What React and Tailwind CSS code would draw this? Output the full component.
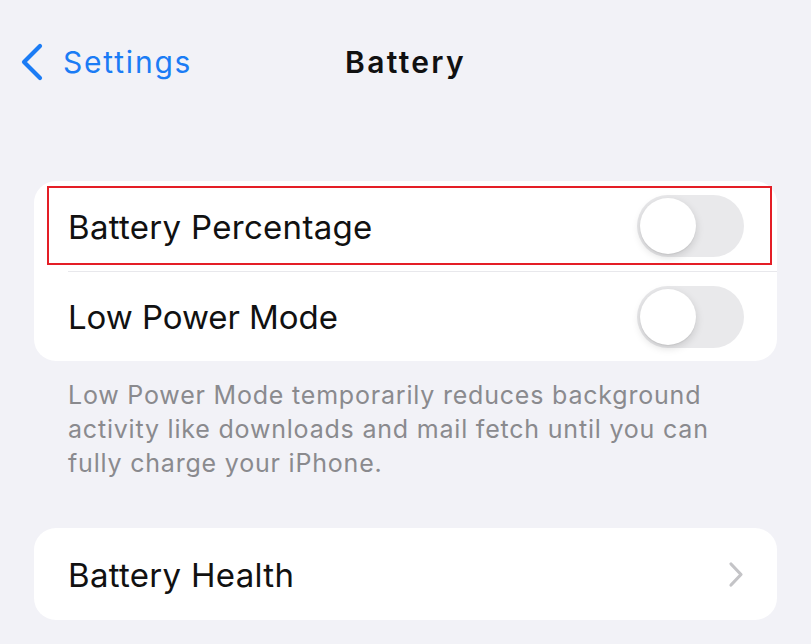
export default function App() {
  return (
    <div
      className="h-[644px] w-[811px] overflow-hidden bg-[#f2f2f7] text-[#111]"
      style={{ fontFamily: "Inter, 'Noto Sans', sans-serif" }}
    >
      <NavBar />
      <div className="px-[34px] pt-[97px]">
        <div className="rounded-[22px] bg-white">
          <div className="relative flex h-[90px] items-center justify-between pl-[34px] pr-[33px]">
            <span className="pt-[3px] text-[33px] tracking-[0.3px]">Battery Percentage</span>
            <Toggle />
            <div className="pointer-events-none absolute left-[13px] right-[5px] top-[5px] bottom-[6px] border-2 border-[#e41e26]" />
          </div>
          <div className="ml-[34px] h-px bg-[#e8e8ec]" />
          <div className="flex h-[89px] items-center justify-between pl-[34px] pr-[33px]">
            <span className="pt-[3px] text-[33px] tracking-[-0.05px]">Low Power Mode</span>
            <Toggle />
          </div>
        </div>
        <p className="px-[34px] pt-[17px] text-[25px] leading-[34px] tracking-[0.8px] text-[#8a8a8e]">
          Low Power Mode temporarily reduces background activity like downloads and mail fetch until you can fully charge your iPhone.
        </p>
        <div className="mt-[48px] flex h-[92px] items-center justify-between rounded-[22px] bg-white pl-[34px] pr-[33px]">
          <span className="pt-[3px] text-[33px] tracking-[0.3px]">Battery Health</span>
          <svg width="16" height="27" viewBox="0 0 16 27" fill="none">
            <path d="M3 3 L13 13.5 L3 24" stroke="#c4c4c7" strokeWidth="3.2" strokeLinecap="round" strokeLinejoin="round" />
          </svg>
        </div>
      </div>
    </div>
  );
}

function NavBar() {
  return (
    <div className="relative flex h-[84px] items-end">
      <div className="flex h-[44px] items-center gap-[19px] pl-[20px] text-[#1b7cf5]">
        <svg width="24" height="38" viewBox="0 0 24 38" fill="none">
          <path d="M20 3 L4 19 L20 35" stroke="#1b7cf5" strokeWidth="4.2" strokeLinecap="round" strokeLinejoin="round" />
        </svg>
        <span className="text-[30px] tracking-[1.8px]">Settings</span>
      </div>
      <div className="absolute bottom-0 left-0 right-0 flex h-[44px] items-center justify-center text-[30px] font-semibold tracking-[2.3px]">
        Battery
      </div>
    </div>
  );
}

function Toggle() {
  return (
    <div className="flex h-[62px] w-[107px] items-center rounded-full bg-[#e9e9eb] p-[3px]">
      <div className="h-[56px] w-[56px] rounded-full bg-white shadow-[0_3px_8px_rgba(0,0,0,0.15),0_1px_1px_rgba(0,0,0,0.06)]" />
    </div>
  );
}
